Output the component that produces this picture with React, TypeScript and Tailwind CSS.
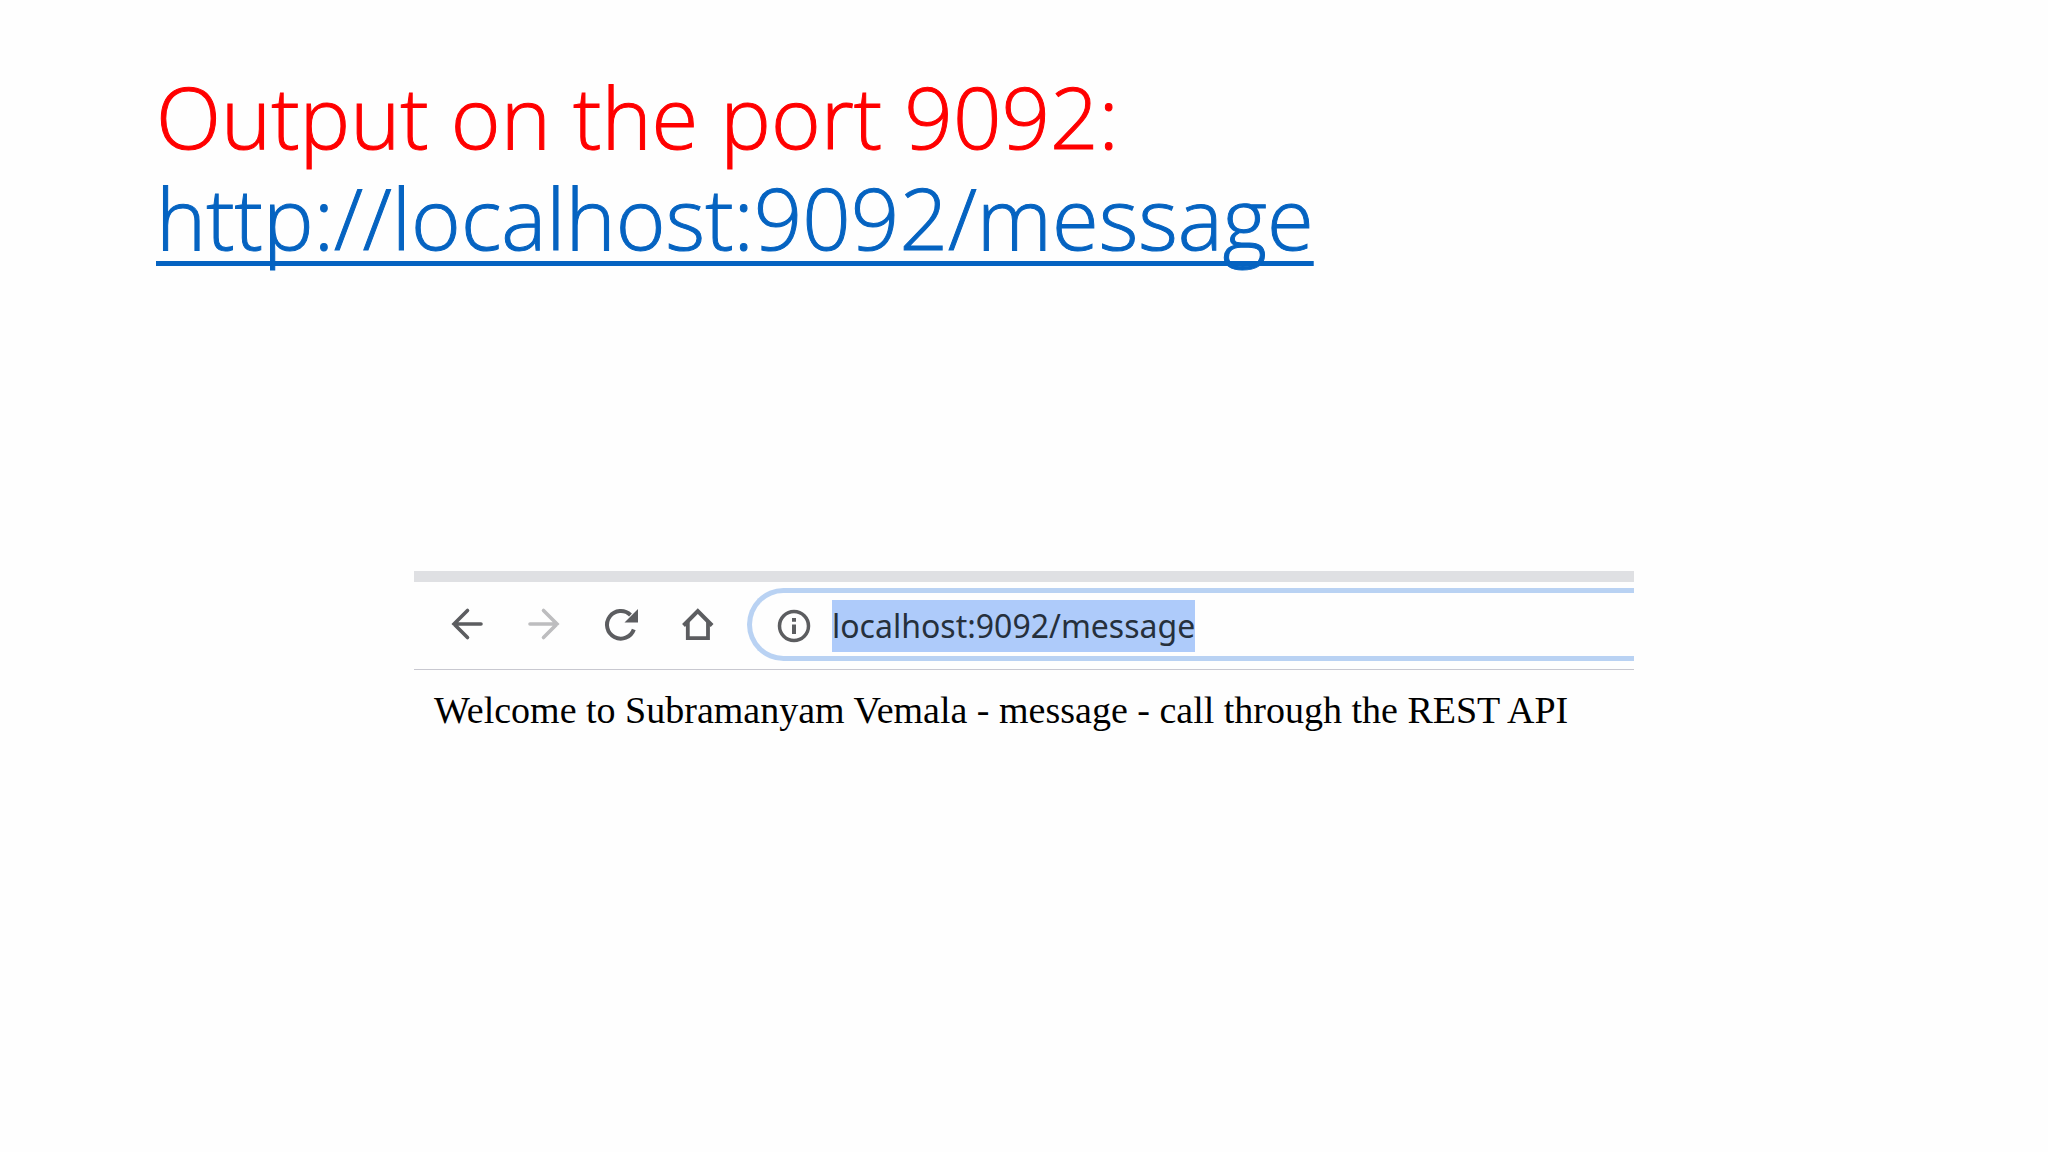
import type { ReactNode } from 'react';

function NavButton({ label, muted, children }: { label: string; muted?: boolean; children: ReactNode }) {
  return (
    <button
      type="button"
      aria-label={label}
      className={muted ? 'size-10 text-[#bdbdbf]' : 'size-10 text-[#5c5d60]'}
    >
      <svg viewBox="0 0 40 40" className="size-10" fill="none" stroke="currentColor" strokeWidth="3.600">
        {children}
      </svg>
    </button>
  );
}

function BrowserToolbar() {
  return (
    <div className="flex items-start border-t-[11px] border-b border-t-[#dfe0e3] border-b-[#c8c8d0] pt-1.5 pb-2">
      <nav aria-label="Browser navigation" className="flex h-[72px] shrink-0 items-center gap-[37px] pl-[33px]">
        <NavButton label="Back">
          <path d="M34 20H7M20.500 6.500L7 20L20.500 33.500" strokeLinecap="round" />
        </NavButton>
        <NavButton label="Forward" muted>
          <path d="M6 20H33M19.500 6.500L33 20L19.500 33.500" strokeLinecap="round" />
        </NavButton>
        <NavButton label="Reload">
          <path d="M32.800 25.500A13.800 13.800 0 1 1 29.500 11" strokeWidth="4" />
          <path d="M37 5V18.500H23.500Z" fill="currentColor" stroke="none" />
        </NavButton>
        <NavButton label="Home">
          <path d="M5.500 21.500L19.800 7.200L34.100 21.500" strokeWidth="4" />
          <path d="M9.800 18V34.200H30V18" strokeWidth="3.800" />
        </NavButton>
      </nav>
      <div className="ml-[29px] flex min-w-0 flex-1 items-center rounded-l-full border-y-[5px] border-l-[5px] border-[#b9d2f3] pt-[7px] pb-1 pl-[25px]">
        <svg viewBox="0 0 34 34" className="mr-[21px] size-[34px] shrink-0" aria-hidden="true">
          <circle cx="17" cy="17" r="14.500" fill="none" stroke="#5c5d60" strokeWidth="3.500" />
          <path d="M15 15.500h4v9.500h-4zM15 9h4v3.800h-4z" fill="#5c5d60" />
        </svg>
        <input
          type="text"
          aria-label="Address"
          defaultValue="localhost:9092/message"
          className="field-sizing-content h-[52px] bg-[#aecbfa] font-['Noto_Sans',sans-serif] text-[32px] leading-[52px] text-[#26303c] outline-none"
        />
      </div>
    </div>
  );
}

export default function App() {
  return (
    <main className="min-h-screen bg-[#fefefe]">
      <h1 className="px-[156px] pt-[66px] font-['Open_Sans',sans-serif] text-[85px] leading-[101px] font-light text-[#ff0000] [-webkit-text-stroke:1px_currentColor]">
        Output on the port 9092:
        <br />
        <a
          href="http://localhost:9092/message"
          className="text-[#0563c1] underline decoration-[5px] underline-offset-[11px] [text-decoration-skip-ink:none]"
        >
          http://localhost:9092/message
        </a>
      </h1>
      <section aria-label="Browser output" className="mx-[414px] mt-[303px]">
        <BrowserToolbar />
        <p className="px-5 pt-[18px] font-['Liberation_Serif',serif] text-[38px] leading-[44px] whitespace-nowrap text-black">
          Welcome to Subramanyam Vemala - message - call through the REST API
        </p>
      </section>
    </main>
  );
}
